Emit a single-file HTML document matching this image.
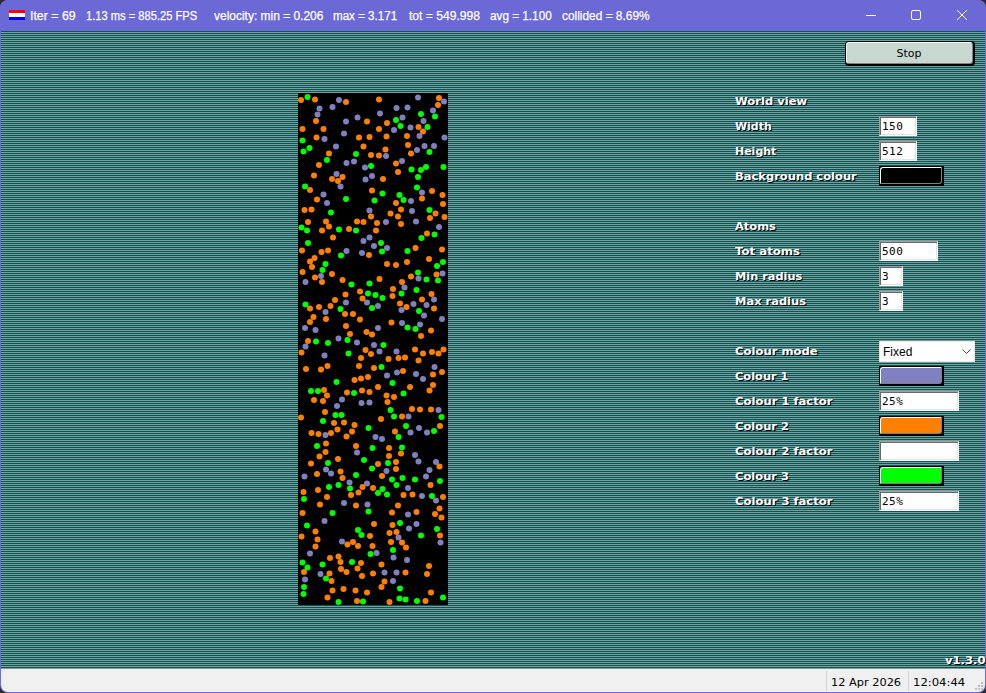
<!DOCTYPE html>
<html><head><meta charset="utf-8"><title>Atoms</title>
<style>
*{box-sizing:border-box;margin:0;padding:0}
html,body{width:986px;height:693px;overflow:hidden;background:#2b2b2b}
body{position:relative;font-family:"Liberation Sans",sans-serif}
#win{position:absolute;left:0;top:0;width:986px;height:693px;background:#7268e4;border-radius:8px;overflow:hidden}
#title{position:absolute;left:0;top:0;width:986px;height:31px;background:#6b69d6;color:#fff;font-size:12px}
#title span{-webkit-text-stroke:0.25px #fff;position:absolute;top:8px;line-height:16px;white-space:pre;transform-origin:0 50%}
#flag{position:absolute;left:9px;top:10px;width:16px;height:10px;background:#fff}
#flag i{position:absolute;left:0;width:16px;height:3px}
#tb{position:absolute;left:0;top:0}
#client{position:absolute;left:1px;top:31px;width:984px;height:638px;background:repeating-linear-gradient(to bottom,#055555 0,#055555 1px,#7a9e9c 1px,#7a9e9c 2px)}
#canvas{position:absolute;left:297px;top:62px;width:150px;height:512px;background:#000}
#canvas svg{position:absolute;left:0;top:0}
#status{position:absolute;left:1px;top:669px;width:984px;height:23px;background:#f0f0f0;border-radius:0 0 7px 7px;font-family:"DejaVu Sans","Liberation Sans",sans-serif;font-size:11px;color:#000}
#grip{position:absolute;left:974px;top:13px}
#status span{position:absolute;top:6px;line-height:16px;white-space:pre;transform-origin:0 50%}
#status i{position:absolute;top:2px;width:1px;height:20px;background:#d4d4d4}
.lbl{position:absolute;left:734px;font-family:"DejaVu Sans","Liberation Sans",sans-serif;font-weight:bold;font-size:11px;color:#fff;text-shadow:1px 1px 0 #000;white-space:pre;line-height:14px;transform-origin:0 50%}
.inp{position:absolute;left:878px;height:20px;background:#fff;border:1px solid;border-color:#a0a0a0 #fff #fff #a0a0a0;box-shadow:inset 1px 1px 0 #696969,inset -1px -1px 0 #e3e3e3;font-family:"DejaVu Sans Mono","Liberation Mono",monospace;font-size:11px;letter-spacing:0.5px;line-height:16px;padding:2px 0 0 2px;color:#000;white-space:pre}
.cb{position:absolute;left:878px;width:65px;height:20px;background:#000}
.cb b{position:absolute;left:1px;top:1px;right:2px;bottom:2px;border-radius:3px 1px 3px 1px;border:1px solid;border-color:#fff #808080 #808080 #fff}
#stop{position:absolute;left:844px;top:10px;width:130px;height:25px;background:#000;border-radius:4px}
#stop b{position:absolute;left:1px;top:1px;right:2px;bottom:2px;border-radius:3px;background:#c8d8d0;border:1px solid;border-color:#fff #808080 #808080 #fff;font-family:"DejaVu Sans","Liberation Sans",sans-serif;font-weight:normal;font-size:11px;line-height:22px;text-align:center;color:#000;padding-right:1px}
#combo{position:absolute;left:878px;top:310px;width:96px;height:21px;background:#fff;border:1px solid #ebe7e7;font-family:"Liberation Sans",sans-serif;font-size:12px;line-height:20px;padding-left:3px;color:#000}
#combo span{display:inline-block;transform:scaleX(1.0);transform-origin:0 50%}
#combo svg{position:absolute;left:81px;top:6px}
#ver{position:absolute;right:0;top:623px;transform:scaleX(1.055);transform-origin:100% 50%;font-family:"DejaVu Sans","Liberation Sans",sans-serif;font-weight:bold;font-size:11px;color:#fff;text-shadow:1px 1px 0 #000;line-height:14px}
</style></head><body>
<div id="win">
<div id="title">
<div id="flag"><i style="top:0;background:#f00"></i><i style="top:7px;background:#00f"></i></div>
<span style="left:30.3px;transform:scaleX(1.03)">Iter = 69</span>
<span style="left:85.8px;transform:scaleX(0.9286)">1.13 ms = 885.25 FPS</span>
<span style="left:213.7px;transform:scaleX(0.9970)">velocity: min = 0.206</span>
<span style="left:333.3px;transform:scaleX(0.9657)">max = 3.171</span>
<span style="left:408.5px;transform:scaleX(1.0084)">tot = 549.998</span>
<span style="left:489.5px;transform:scaleX(0.9784)">avg = 1.100</span>
<span style="left:561.9px;transform:scaleX(0.9909)">collided = 8.69%</span>
<svg id="tb" width="986" height="31" viewBox="0 0 986 31" fill="none" stroke="#fff" stroke-width="1">
<path d="M866 15.5h10"/>
<rect x="911.5" y="10.5" width="9" height="9" rx="1.5"/>
<path d="M957 10l10 10M967 10l-10 10"/>
</svg>
</div>
<div id="client">
<div id="canvas"><svg width="150" height="512" viewBox="0 0 150 512">
<g fill="#8080c0">
<circle cx="41" cy="7" r="3"/><circle cx="120" cy="4.5" r="3"/><circle cx="146" cy="8.5" r="3"/><circle cx="34.5" cy="14" r="3"/><circle cx="21.5" cy="15.5" r="3"/><circle cx="98.5" cy="15" r="3"/><circle cx="109.5" cy="14.5" r="3"/><circle cx="135" cy="17.5" r="3"/><circle cx="19.5" cy="21.5" r="3"/><circle cx="82" cy="20.5" r="3"/><circle cx="59.5" cy="24.5" r="3"/><circle cx="104.5" cy="24.5" r="3"/><circle cx="48" cy="28.5" r="3"/><circle cx="125.5" cy="28" r="3"/><circle cx="112.5" cy="34.5" r="3"/><circle cx="96" cy="37" r="3"/><circle cx="46" cy="40.5" r="3"/><circle cx="121.5" cy="43" r="3"/><circle cx="26.5" cy="46" r="3"/><circle cx="146.5" cy="44.5" r="3"/><circle cx="38" cy="53.5" r="3"/><circle cx="126.5" cy="53" r="3"/><circle cx="136" cy="53" r="3"/><circle cx="119" cy="57" r="3"/><circle cx="88" cy="63" r="3"/><circle cx="48.5" cy="70" r="3"/><circle cx="56" cy="68.5" r="3"/><circle cx="104" cy="68" r="3"/><circle cx="67" cy="74.5" r="3"/><circle cx="38.5" cy="81" r="3"/><circle cx="74" cy="83" r="3"/><circle cx="67.5" cy="86.5" r="3"/><circle cx="42.5" cy="93.5" r="3"/><circle cx="25.5" cy="101.5" r="3"/><circle cx="124" cy="99.5" r="3"/><circle cx="29" cy="110" r="3"/><circle cx="113" cy="108" r="3"/><circle cx="71.5" cy="117.5" r="3"/><circle cx="114" cy="118" r="3"/><circle cx="88" cy="129" r="3"/><circle cx="118" cy="128.5" r="3"/><circle cx="141" cy="134" r="3"/><circle cx="71.5" cy="144.5" r="3"/><circle cx="65.5" cy="148" r="3"/><circle cx="76" cy="153" r="3"/><circle cx="89" cy="155" r="3"/><circle cx="48.5" cy="158" r="3"/><circle cx="64" cy="160" r="3"/><circle cx="23" cy="183" r="3"/><circle cx="144.5" cy="180.5" r="3"/><circle cx="120.5" cy="185.5" r="3"/><circle cx="7.5" cy="189" r="3"/><circle cx="106.5" cy="194.5" r="3"/><circle cx="136" cy="206.5" r="3"/><circle cx="48" cy="209.5" r="3"/><circle cx="69" cy="209.5" r="3"/><circle cx="115.5" cy="211" r="3"/><circle cx="128.5" cy="212" r="3"/><circle cx="80" cy="213" r="3"/><circle cx="103.5" cy="217" r="3"/><circle cx="27.5" cy="219" r="3"/><circle cx="126" cy="222.5" r="3"/><circle cx="144" cy="226" r="3"/><circle cx="104" cy="230" r="3"/><circle cx="122" cy="231.5" r="3"/><circle cx="7" cy="235" r="3"/><circle cx="80" cy="235" r="3"/><circle cx="17.5" cy="237" r="3"/><circle cx="40.5" cy="245.5" r="3"/><circle cx="59" cy="249.5" r="3"/><circle cx="76" cy="252" r="3"/><circle cx="7.5" cy="253.5" r="3"/><circle cx="81.5" cy="258.5" r="3"/><circle cx="98.5" cy="258.5" r="3"/><circle cx="26.5" cy="262.5" r="3"/><circle cx="136.5" cy="274" r="3"/><circle cx="99" cy="279.5" r="3"/><circle cx="118" cy="281" r="3"/><circle cx="89" cy="282.5" r="3"/><circle cx="125" cy="286" r="3"/><circle cx="44" cy="306.5" r="3"/><circle cx="63.5" cy="310" r="3"/><circle cx="71.5" cy="309.5" r="3"/><circle cx="39" cy="313" r="3"/><circle cx="140.5" cy="317" r="3"/><circle cx="110.5" cy="323.5" r="3"/><circle cx="121" cy="335" r="3"/><circle cx="112.5" cy="339.5" r="3"/><circle cx="129" cy="339.5" r="3"/><circle cx="27.5" cy="342" r="3"/><circle cx="77.5" cy="344" r="3"/><circle cx="84" cy="346" r="3"/><circle cx="59" cy="359.5" r="3"/><circle cx="117" cy="362" r="3"/><circle cx="120.5" cy="368.5" r="3"/><circle cx="138" cy="369" r="3"/><circle cx="28" cy="376.5" r="3"/><circle cx="33" cy="380.5" r="3"/><circle cx="88.5" cy="378" r="3"/><circle cx="131.5" cy="377" r="3"/><circle cx="6.5" cy="383.5" r="3"/><circle cx="128" cy="383.5" r="3"/><circle cx="51.5" cy="389.5" r="3"/><circle cx="69" cy="390.5" r="3"/><circle cx="110" cy="395" r="3"/><circle cx="124" cy="403" r="3"/><circle cx="138" cy="407.5" r="3"/><circle cx="46" cy="410" r="3"/><circle cx="69.5" cy="411.5" r="3"/><circle cx="110" cy="421.5" r="3"/><circle cx="26.5" cy="428" r="3"/><circle cx="118.5" cy="431" r="3"/><circle cx="111" cy="435.5" r="3"/><circle cx="100.5" cy="444.5" r="3"/><circle cx="44" cy="448.5" r="3"/><circle cx="142.5" cy="449.5" r="3"/><circle cx="12" cy="460.5" r="3"/><circle cx="78.5" cy="460" r="3"/><circle cx="95.5" cy="464.5" r="3"/><circle cx="109" cy="467" r="3"/><circle cx="86.5" cy="479.5" r="3"/><circle cx="98.5" cy="479.5" r="3"/><circle cx="22.5" cy="481" r="3"/><circle cx="7" cy="486.5" r="3"/><circle cx="95" cy="488" r="3"/>
</g>
<g fill="#ff8000">
<circle cx="3" cy="7" r="3"/><circle cx="17" cy="6.5" r="3"/><circle cx="48" cy="9" r="3"/><circle cx="81" cy="6.5" r="3"/><circle cx="141" cy="5" r="3"/><circle cx="140" cy="12" r="3"/><circle cx="18" cy="28" r="3"/><circle cx="69" cy="28.5" r="3"/><circle cx="89" cy="30" r="3"/><circle cx="4.5" cy="36" r="3"/><circle cx="25.5" cy="36" r="3"/><circle cx="81" cy="36" r="3"/><circle cx="120.5" cy="34" r="3"/><circle cx="125" cy="38.5" r="3"/><circle cx="18.5" cy="44.5" r="3"/><circle cx="61" cy="44.5" r="3"/><circle cx="71.5" cy="44" r="3"/><circle cx="88.5" cy="43.5" r="3"/><circle cx="109" cy="43" r="3"/><circle cx="65.5" cy="53.5" r="3"/><circle cx="110" cy="52" r="3"/><circle cx="87.5" cy="56.5" r="3"/><circle cx="31" cy="60.5" r="3"/><circle cx="73" cy="62" r="3"/><circle cx="81" cy="62.5" r="3"/><circle cx="113" cy="60.5" r="3"/><circle cx="21" cy="72" r="3"/><circle cx="98" cy="70.5" r="3"/><circle cx="16" cy="82.5" r="3"/><circle cx="100" cy="79" r="3"/><circle cx="34" cy="86" r="3"/><circle cx="44.5" cy="84" r="3"/><circle cx="40" cy="88" r="3"/><circle cx="85" cy="86" r="3"/><circle cx="12" cy="97" r="3"/><circle cx="74" cy="97.5" r="3"/><circle cx="134" cy="98" r="3"/><circle cx="144.5" cy="102" r="3"/><circle cx="19" cy="106.5" r="3"/><circle cx="124" cy="105.5" r="3"/><circle cx="98" cy="110" r="3"/><circle cx="145" cy="111" r="3"/><circle cx="6.5" cy="117" r="3"/><circle cx="13.5" cy="116.5" r="3"/><circle cx="103" cy="116.5" r="3"/><circle cx="92.5" cy="120.5" r="3"/><circle cx="73" cy="123.5" r="3"/><circle cx="100" cy="123.5" r="3"/><circle cx="137.5" cy="120.5" r="3"/><circle cx="132" cy="125" r="3"/><circle cx="146.5" cy="124" r="3"/><circle cx="10" cy="129" r="3"/><circle cx="28" cy="128.5" r="3"/><circle cx="59" cy="128.5" r="3"/><circle cx="65.5" cy="129" r="3"/><circle cx="79" cy="130" r="3"/><circle cx="103" cy="131" r="3"/><circle cx="31" cy="133.5" r="3"/><circle cx="24" cy="137.5" r="3"/><circle cx="51" cy="136" r="3"/><circle cx="78" cy="137.5" r="3"/><circle cx="35" cy="144.5" r="3"/><circle cx="129" cy="140.5" r="3"/><circle cx="4" cy="157.5" r="3"/><circle cx="23.5" cy="159" r="3"/><circle cx="30" cy="157.5" r="3"/><circle cx="117.5" cy="155" r="3"/><circle cx="144" cy="156.5" r="3"/><circle cx="71" cy="162" r="3"/><circle cx="16.5" cy="165" r="3"/><circle cx="12" cy="168.5" r="3"/><circle cx="131" cy="166" r="3"/><circle cx="14" cy="174" r="3"/><circle cx="89" cy="171" r="3"/><circle cx="98" cy="172" r="3"/><circle cx="109" cy="169" r="3"/><circle cx="4.5" cy="179" r="3"/><circle cx="34" cy="181" r="3"/><circle cx="17" cy="184.5" r="3"/><circle cx="113" cy="183.5" r="3"/><circle cx="138.5" cy="181.5" r="3"/><circle cx="44.5" cy="187" r="3"/><circle cx="81.5" cy="186" r="3"/><circle cx="24" cy="189" r="3"/><circle cx="104" cy="189" r="3"/><circle cx="95" cy="196" r="3"/><circle cx="62" cy="198.5" r="3"/><circle cx="47.5" cy="201.5" r="3"/><circle cx="133.5" cy="201" r="3"/><circle cx="94.5" cy="203" r="3"/><circle cx="64.5" cy="205.5" r="3"/><circle cx="124" cy="206.5" r="3"/><circle cx="37" cy="207" r="3"/><circle cx="102" cy="210.5" r="3"/><circle cx="21" cy="214" r="3"/><circle cx="32.5" cy="213" r="3"/><circle cx="12" cy="215.5" r="3"/><circle cx="108.5" cy="214" r="3"/><circle cx="136" cy="215.5" r="3"/><circle cx="47" cy="221" r="3"/><circle cx="55" cy="221" r="3"/><circle cx="15.5" cy="224" r="3"/><circle cx="28" cy="226" r="3"/><circle cx="62" cy="226.5" r="3"/><circle cx="12" cy="229" r="3"/><circle cx="93.5" cy="229.5" r="3"/><circle cx="48" cy="233" r="3"/><circle cx="133" cy="237.5" r="3"/><circle cx="68.5" cy="239" r="3"/><circle cx="52" cy="241" r="3"/><circle cx="74" cy="241.5" r="3"/><circle cx="123" cy="243" r="3"/><circle cx="10" cy="248" r="3"/><circle cx="3.5" cy="259.5" r="3"/><circle cx="67.5" cy="257" r="3"/><circle cx="117" cy="256.5" r="3"/><circle cx="145.5" cy="256.5" r="3"/><circle cx="73" cy="261" r="3"/><circle cx="125" cy="260.5" r="3"/><circle cx="134" cy="259" r="3"/><circle cx="140.5" cy="260.5" r="3"/><circle cx="63" cy="265" r="3"/><circle cx="90.5" cy="266" r="3"/><circle cx="100.5" cy="265" r="3"/><circle cx="107" cy="264.5" r="3"/><circle cx="120.5" cy="267.5" r="3"/><circle cx="29.5" cy="273" r="3"/><circle cx="61" cy="273" r="3"/><circle cx="8" cy="276" r="3"/><circle cx="23" cy="276.5" r="3"/><circle cx="76" cy="275" r="3"/><circle cx="105" cy="278" r="3"/><circle cx="144" cy="279" r="3"/><circle cx="135" cy="281.5" r="3"/><circle cx="70" cy="284" r="3"/><circle cx="63" cy="285.5" r="3"/><circle cx="56.5" cy="287" r="3"/><circle cx="135" cy="292" r="3"/><circle cx="80" cy="294" r="3"/><circle cx="112" cy="294" r="3"/><circle cx="131.5" cy="297.5" r="3"/><circle cx="26" cy="297" r="3"/><circle cx="64" cy="297.5" r="3"/><circle cx="71.5" cy="299" r="3"/><circle cx="49" cy="299.5" r="3"/><circle cx="29" cy="302.5" r="3"/><circle cx="88.5" cy="302.5" r="3"/><circle cx="96" cy="304" r="3"/><circle cx="16" cy="307" r="3"/><circle cx="25" cy="308" r="3"/><circle cx="89.5" cy="309" r="3"/><circle cx="114" cy="316" r="3"/><circle cx="122" cy="316.5" r="3"/><circle cx="133" cy="316.5" r="3"/><circle cx="27" cy="319" r="3"/><circle cx="3" cy="324.5" r="3"/><circle cx="83" cy="326" r="3"/><circle cx="104" cy="323.5" r="3"/><circle cx="36" cy="330" r="3"/><circle cx="46" cy="329.5" r="3"/><circle cx="56.5" cy="332" r="3"/><circle cx="142" cy="333" r="3"/><circle cx="39.5" cy="336.5" r="3"/><circle cx="13.5" cy="340" r="3"/><circle cx="20.5" cy="341" r="3"/><circle cx="33" cy="340" r="3"/><circle cx="54" cy="338.5" r="3"/><circle cx="97" cy="338.5" r="3"/><circle cx="48.5" cy="343.5" r="3"/><circle cx="28" cy="350.5" r="3"/><circle cx="58" cy="353" r="3"/><circle cx="91" cy="355" r="3"/><circle cx="27.5" cy="359" r="3"/><circle cx="103" cy="360.5" r="3"/><circle cx="21.5" cy="363.5" r="3"/><circle cx="91" cy="363" r="3"/><circle cx="40" cy="366" r="3"/><circle cx="13" cy="370.5" r="3"/><circle cx="80" cy="371" r="3"/><circle cx="98" cy="369" r="3"/><circle cx="98" cy="376" r="3"/><circle cx="141.5" cy="373.5" r="3"/><circle cx="42.5" cy="378.5" r="3"/><circle cx="19" cy="381" r="3"/><circle cx="44.5" cy="385" r="3"/><circle cx="84" cy="383" r="3"/><circle cx="132.5" cy="392" r="3"/><circle cx="5.5" cy="399" r="3"/><circle cx="20" cy="397" r="3"/><circle cx="64.5" cy="394" r="3"/><circle cx="75" cy="395" r="3"/><circle cx="60.5" cy="399.5" r="3"/><circle cx="53" cy="402" r="3"/><circle cx="29" cy="404" r="3"/><circle cx="105.5" cy="402" r="3"/><circle cx="114.5" cy="401.5" r="3"/><circle cx="145" cy="404" r="3"/><circle cx="22" cy="411.5" r="3"/><circle cx="58" cy="412.5" r="3"/><circle cx="100" cy="412.5" r="3"/><circle cx="141.5" cy="415.5" r="3"/><circle cx="4.5" cy="420" r="3"/><circle cx="94" cy="419.5" r="3"/><circle cx="118.5" cy="419" r="3"/><circle cx="137" cy="421" r="3"/><circle cx="143.5" cy="424.5" r="3"/><circle cx="76" cy="431" r="3"/><circle cx="94.5" cy="432" r="3"/><circle cx="17.5" cy="438.5" r="3"/><circle cx="91.5" cy="440" r="3"/><circle cx="98.5" cy="439" r="3"/><circle cx="3.5" cy="443.5" r="3"/><circle cx="72" cy="443" r="3"/><circle cx="142" cy="442.5" r="3"/><circle cx="19.5" cy="446.5" r="3"/><circle cx="55" cy="449" r="3"/><circle cx="93" cy="449" r="3"/><circle cx="104" cy="449.5" r="3"/><circle cx="49.5" cy="451.5" r="3"/><circle cx="60" cy="453" r="3"/><circle cx="17.5" cy="453.5" r="3"/><circle cx="74.5" cy="453" r="3"/><circle cx="108" cy="454.5" r="3"/><circle cx="40.5" cy="463.5" r="3"/><circle cx="32" cy="465" r="3"/><circle cx="42.5" cy="469" r="3"/><circle cx="63" cy="470" r="3"/><circle cx="83.5" cy="471.5" r="3"/><circle cx="131" cy="473" r="3"/><circle cx="43" cy="476" r="3"/><circle cx="59.5" cy="475.5" r="3"/><circle cx="6" cy="479" r="3"/><circle cx="48.5" cy="479" r="3"/><circle cx="31.5" cy="480.5" r="3"/><circle cx="75" cy="480.5" r="3"/><circle cx="107.5" cy="479.5" r="3"/><circle cx="129" cy="481" r="3"/><circle cx="64" cy="483" r="3"/><circle cx="33.5" cy="488" r="3"/><circle cx="86.5" cy="488.5" r="3"/><circle cx="83.5" cy="494" r="3"/><circle cx="34.5" cy="497.5" r="3"/><circle cx="45.5" cy="496" r="3"/><circle cx="57.5" cy="497.5" r="3"/><circle cx="69" cy="499.5" r="3"/><circle cx="133" cy="499.5" r="3"/><circle cx="29.5" cy="504.5" r="3"/><circle cx="59" cy="508" r="3"/><circle cx="91.5" cy="509" r="3"/><circle cx="127.5" cy="508" r="3"/>
</g>
<g fill="#00ff00">
<circle cx="9.5" cy="4" r="3"/><circle cx="123" cy="21" r="3"/><circle cx="137" cy="23.5" r="3"/><circle cx="98" cy="27" r="3"/><circle cx="102.5" cy="33" r="3"/><circle cx="129.5" cy="34" r="3"/><circle cx="4.5" cy="47.5" r="3"/><circle cx="11.5" cy="55" r="3"/><circle cx="5.5" cy="58.5" r="3"/><circle cx="58" cy="61" r="3"/><circle cx="131.5" cy="59" r="3"/><circle cx="29" cy="67" r="3"/><circle cx="73" cy="73" r="3"/><circle cx="113.5" cy="76.5" r="3"/><circle cx="123" cy="77" r="3"/><circle cx="128" cy="74" r="3"/><circle cx="145.5" cy="74" r="3"/><circle cx="120" cy="84" r="3"/><circle cx="7" cy="93.5" r="3"/><circle cx="119" cy="94.5" r="3"/><circle cx="84.5" cy="100.5" r="3"/><circle cx="101.5" cy="102" r="3"/><circle cx="48" cy="106" r="3"/><circle cx="76.5" cy="107.5" r="3"/><circle cx="105.5" cy="107" r="3"/><circle cx="33" cy="119.5" r="3"/><circle cx="131.5" cy="117" r="3"/><circle cx="3.5" cy="134.5" r="3"/><circle cx="9" cy="137.5" r="3"/><circle cx="41" cy="136.5" r="3"/><circle cx="58" cy="137.5" r="3"/><circle cx="10" cy="150" r="3"/><circle cx="123.5" cy="145" r="3"/><circle cx="136.5" cy="141.5" r="3"/><circle cx="83" cy="150" r="3"/><circle cx="84" cy="158.5" r="3"/><circle cx="109.5" cy="158" r="3"/><circle cx="43" cy="162.5" r="3"/><circle cx="27.5" cy="171" r="3"/><circle cx="24.5" cy="177" r="3"/><circle cx="145" cy="169" r="3"/><circle cx="139" cy="173" r="3"/><circle cx="120" cy="179.5" r="3"/><circle cx="128.5" cy="186.5" r="3"/><circle cx="140" cy="187.5" r="3"/><circle cx="53.5" cy="191.5" r="3"/><circle cx="71.5" cy="190.5" r="3"/><circle cx="118.5" cy="197" r="3"/><circle cx="70" cy="200.5" r="3"/><circle cx="103.5" cy="200.5" r="3"/><circle cx="77.5" cy="202" r="3"/><circle cx="84.5" cy="205" r="3"/><circle cx="7.5" cy="211.5" r="3"/><circle cx="74" cy="215" r="3"/><circle cx="42.5" cy="216" r="3"/><circle cx="121" cy="218" r="3"/><circle cx="109.5" cy="234.5" r="3"/><circle cx="117.5" cy="236" r="3"/><circle cx="49.5" cy="247" r="3"/><circle cx="18" cy="248.5" r="3"/><circle cx="30" cy="250" r="3"/><circle cx="85.5" cy="252" r="3"/><circle cx="50.5" cy="260.5" r="3"/><circle cx="83.5" cy="274" r="3"/><circle cx="38.5" cy="289" r="3"/><circle cx="94.5" cy="290" r="3"/><circle cx="13" cy="298" r="3"/><circle cx="20" cy="298" r="3"/><circle cx="56" cy="300" r="3"/><circle cx="105.5" cy="300.5" r="3"/><circle cx="92.5" cy="317" r="3"/><circle cx="37.5" cy="322" r="3"/><circle cx="43.5" cy="322" r="3"/><circle cx="96" cy="323.5" r="3"/><circle cx="143.5" cy="324" r="3"/><circle cx="25" cy="328" r="3"/><circle cx="108" cy="333" r="3"/><circle cx="70.5" cy="335" r="3"/><circle cx="136" cy="338" r="3"/><circle cx="100.5" cy="344" r="3"/><circle cx="19" cy="353" r="3"/><circle cx="74.5" cy="355" r="3"/><circle cx="104" cy="354.5" r="3"/><circle cx="66" cy="367" r="3"/><circle cx="30" cy="370" r="3"/><circle cx="90" cy="370" r="3"/><circle cx="74" cy="375.5" r="3"/><circle cx="58" cy="382" r="3"/><circle cx="104.5" cy="385" r="3"/><circle cx="94" cy="386.5" r="3"/><circle cx="117" cy="386.5" r="3"/><circle cx="142" cy="388" r="3"/><circle cx="31" cy="394" r="3"/><circle cx="40.5" cy="392" r="3"/><circle cx="98.5" cy="392" r="3"/><circle cx="52" cy="395.5" r="3"/><circle cx="84.5" cy="396" r="3"/><circle cx="80" cy="400" r="3"/><circle cx="89" cy="401.5" r="3"/><circle cx="134" cy="403" r="3"/><circle cx="6" cy="406" r="3"/><circle cx="70.5" cy="418.5" r="3"/><circle cx="34.5" cy="420" r="3"/><circle cx="102" cy="430" r="3"/><circle cx="9" cy="432.5" r="3"/><circle cx="139" cy="436" r="3"/><circle cx="60" cy="437" r="3"/><circle cx="63.5" cy="442" r="3"/><circle cx="123" cy="442.5" r="3"/><circle cx="95" cy="457" r="3"/><circle cx="72.5" cy="461" r="3"/><circle cx="4.5" cy="469.5" r="3"/><circle cx="54" cy="469" r="3"/><circle cx="24.5" cy="471.5" r="3"/><circle cx="9.5" cy="474.5" r="3"/><circle cx="28" cy="485.5" r="3"/><circle cx="6" cy="494" r="3"/><circle cx="102" cy="495.5" r="3"/><circle cx="5.5" cy="501" r="3"/><circle cx="101.5" cy="505.5" r="3"/><circle cx="107.5" cy="506.5" r="3"/><circle cx="145" cy="504.5" r="3"/><circle cx="40.5" cy="509" r="3"/><circle cx="65" cy="508.5" r="3"/><circle cx="119" cy="508" r="3"/>
</g>
</svg></div>
<div id="stop"><b>Stop</b></div>
<div class="lbl" style="top:64px;transform:scaleX(1.049)">World view</div>
<div class="lbl" style="top:89px;transform:scaleX(0.995)">Width</div>
<div class="lbl" style="top:114px;transform:scaleX(0.997)">Height</div>
<div class="lbl" style="top:139px;transform:scaleX(1.045)">Background colour</div>
<div class="lbl" style="top:189px;transform:scaleX(1.04)">Atoms</div>
<div class="lbl" style="top:214px;transform:scaleX(1.068)">Tot atoms</div>
<div class="lbl" style="top:239px;transform:scaleX(1.03)">Min radius</div>
<div class="lbl" style="top:264px;transform:scaleX(1.042)">Max radius</div>
<div class="lbl" style="top:314px;transform:scaleX(1.055)">Colour mode</div>
<div class="lbl" style="top:339px;transform:scaleX(1.035)">Colour 1</div>
<div class="lbl" style="top:364px;transform:scaleX(1.053)">Colour 1 factor</div>
<div class="lbl" style="top:389px;transform:scaleX(1.045)">Colour 2</div>
<div class="lbl" style="top:414px;transform:scaleX(1.053)">Colour 2 factor</div>
<div class="lbl" style="top:439px;transform:scaleX(1.045)">Colour 3</div>
<div class="lbl" style="top:464px;transform:scaleX(1.053)">Colour 3 factor</div>
<div class="inp" style="top:85px;width:38px">150</div>
<div class="inp" style="top:110px;width:38px">512</div>
<div class="cb" style="top:135px"><b style="background:#000"></b></div>
<div class="inp" style="top:210px;width:59px">500</div>
<div class="inp" style="top:235px;width:24px">3</div>
<div class="inp" style="top:260px;width:24px">3</div>
<div id="combo"><span>Fixed</span><svg width="12" height="8" viewBox="0 0 12 8" fill="none" stroke="#4a4a4a" stroke-width="1"><path d="M1.5 1.5l4 4 4-4"/></svg></div>
<div class="cb" style="top:335px"><b style="background:#8080c0"></b></div>
<div class="inp" style="top:360px;width:80px">25%</div>
<div class="cb" style="top:385px"><b style="background:#ff8000"></b></div>
<div class="inp" style="top:410px;width:80px"></div>
<div class="cb" style="top:435px"><b style="background:#00ff00"></b></div>
<div class="inp" style="top:460px;width:80px">25%</div>
<div id="ver">v1.3.0</div>
</div>
<div id="status"><i style="left:825px"></i><i style="left:907px"></i><span style="left:829.6px;transform:scaleX(1.03)">12 Apr 2026</span><span style="left:911.8px;transform:scaleX(1.057)">12:04:44</span><svg id="grip" width="8" height="8" viewBox="0 0 8 8" fill="#bfbfbf"><path d="M6 0h2v2h-2zM3 3h2v2h-2zM6 3h2v2h-2zM0 6h2v2h-2zM3 6h2v2h-2zM6 6h2v2h-2z"/></svg></div>
</div>
</body></html>
